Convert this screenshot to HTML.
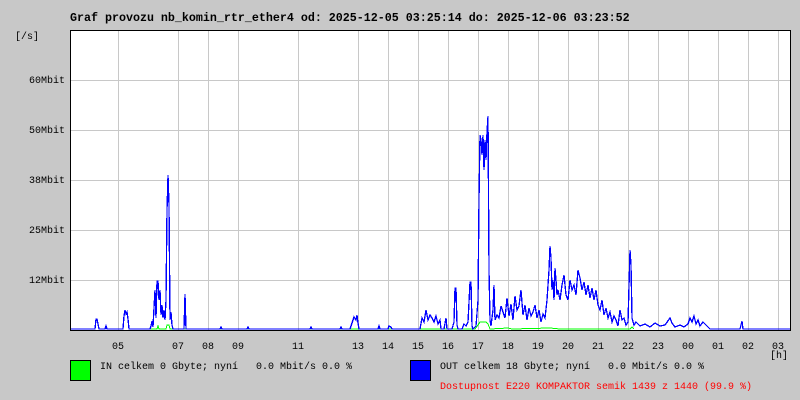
<!DOCTYPE html>
<html><head><meta charset="utf-8"><style>
html,body{margin:0;padding:0;}
body{width:800px;height:400px;background:#c8c8c8;position:relative;overflow:hidden;font-family:"Liberation Mono",monospace;}
.t{position:absolute;font-size:10px;line-height:10px;color:#000;white-space:pre;}
</style></head><body>
<div class="t" style="left:70px;top:13px;font-size:11.67px;font-weight:bold;">Graf provozu nb_komin_rtr_ether4 od: 2025-12-05 03:25:14 do: 2025-12-06 03:23:52</div>
<div class="t" style="left:15px;top:33px;">[/s]</div>
<div class="t" style="left:29px;top:77px;">60Mbit</div>
<div class="t" style="left:29px;top:127px;">50Mbit</div>
<div class="t" style="left:29px;top:177px;">38Mbit</div>
<div class="t" style="left:29px;top:227px;">25Mbit</div>
<div class="t" style="left:29px;top:277px;">12Mbit</div>
<svg style="position:absolute;left:0;top:0" width="800" height="400" shape-rendering="crispEdges">
<rect x="70" y="30" width="720" height="300" fill="#fff"/>
<g stroke="#c8c8c8" stroke-width="1">
<path d="M118.5 30V330M178.5 30V330M208.5 30V330M238.5 30V330M298.5 30V330M358.5 30V330M388.5 30V330M418.5 30V330M448.5 30V330M478.5 30V330M508.5 30V330M538.5 30V330M568.5 30V330M598.5 30V330M628.5 30V330M658.5 30V330M688.5 30V330M718.5 30V330M748.5 30V330M778.5 30V330"/>
<path d="M70 80.5H790M70 130.5H790M70 180.5H790M70 230.5H790M70 280.5H790"/>
</g>
<polyline fill="none" stroke="#00ff00" stroke-width="1" points="150,329 157,329 158,326 159,329 166,329 167,325 169,325 170,329 475,329 478,325 480,322 486,322 488,324 490,329 508,328 512,329 550,328 560,329 630,329 632,327 634,329"/>
<polyline fill="none" stroke="#0000ff" stroke-width="1.3" points="70,329 95,329 96,319 97,319 98,324 99,329 105,329 106,326 107,329 123,329 124,316 125,310 126,314 127,312 128,319 129,329 150,329 151,326 152,321 153,327 154,308 155,290 156,318 157,281 158,281 159,300 160,290 161,315 162,305 163,318 164,310 165,320 166,300 167,210 168,175 169,205 170,320 171,312 172,325 173,329 184,329 185,294 186,329 220,329 221,327 222,329 247,329 248,327 249,329 310,329 311,327 312,329 340,329 341,327 342,329 350,329 352,323 354,317 356,320 357,315 358,323 359,329 378,329 379,326 380,329 388,329 389,326 391,327 392,329 420,329 422,318 424,322 426,310 428,320 430,315 432,318 434,322 436,316 438,324 440,320 441,329 444,329 446,318 447,329 452,329 454,322 455,288 456,288 457,325 458,329 462,329 464,324 466,326 468,322 470,282 471,282 472,326 473,329 476,326 478,300 479,200 480,135 481,140 482,155 483,135 484,170 485,140 486,160 487,132 488,116 489,270 490,320 491,326 493,310 494,285 495,320 497,315 499,318 501,306 503,312 505,318 507,298 509,316 511,304 513,320 515,296 517,310 519,306 521,290 523,315 525,305 527,320 529,308 531,316 533,312 535,305 537,318 539,310 541,322 543,314 545,318 547,300 549,270 550,246 551,258 552,290 553,280 554,300 555,268 556,280 557,295 558,290 560,300 562,285 564,275 566,295 568,300 570,280 572,290 574,285 576,295 578,270 580,278 582,290 584,282 586,295 588,285 590,298 592,288 594,300 596,290 598,305 600,310 602,300 604,315 606,308 608,318 610,312 612,322 614,316 616,320 618,326 620,310 622,320 624,318 626,325 628,322 630,250 631,265 632,318 634,325 636,322 640,326 645,324 650,327 655,323 660,326 665,325 670,318 672,323 675,327 680,325 684,327 688,324 690,318 692,322 694,316 696,324 698,320 700,326 703,322 706,325 708,327 710,329 740,329 742,321 743,329 790,329"/>
<path d="M70.5 30V330.5H790.5V30" fill="none" stroke="#000" stroke-width="1"/>
<path d="M70 30.5H790" stroke="#000" stroke-width="1"/>
<rect x="70.5" y="360.5" width="20" height="20" fill="#00ff00" stroke="#000"/>
<rect x="410.5" y="360.5" width="20" height="20" fill="#0000ff" stroke="#000"/>
</svg>
<div class="t" style="left:112px;top:343px;">05</div>
<div class="t" style="left:172px;top:343px;">07</div>
<div class="t" style="left:202px;top:343px;">08</div>
<div class="t" style="left:232px;top:343px;">09</div>
<div class="t" style="left:292px;top:343px;">11</div>
<div class="t" style="left:352px;top:343px;">13</div>
<div class="t" style="left:382px;top:343px;">14</div>
<div class="t" style="left:412px;top:343px;">15</div>
<div class="t" style="left:442px;top:343px;">16</div>
<div class="t" style="left:472px;top:343px;">17</div>
<div class="t" style="left:502px;top:343px;">18</div>
<div class="t" style="left:532px;top:343px;">19</div>
<div class="t" style="left:562px;top:343px;">20</div>
<div class="t" style="left:592px;top:343px;">21</div>
<div class="t" style="left:622px;top:343px;">22</div>
<div class="t" style="left:652px;top:343px;">23</div>
<div class="t" style="left:682px;top:343px;">00</div>
<div class="t" style="left:712px;top:343px;">01</div>
<div class="t" style="left:742px;top:343px;">02</div>
<div class="t" style="left:772px;top:343px;">03</div>
<div class="t" style="left:770px;top:352px;">[h]</div>
<div class="t" style="left:100px;top:363px;">IN celkem 0 Gbyte; nyní   0.0 Mbit/s 0.0 %</div>
<div class="t" style="left:440px;top:363px;">OUT celkem 18 Gbyte; nyní   0.0 Mbit/s 0.0 %</div>
<div class="t" style="left:440px;top:383px;color:#ff0000;">Dostupnost E220 KOMPAKTOR semik 1439 z 1440 (99.9 %)</div>
</body></html>
